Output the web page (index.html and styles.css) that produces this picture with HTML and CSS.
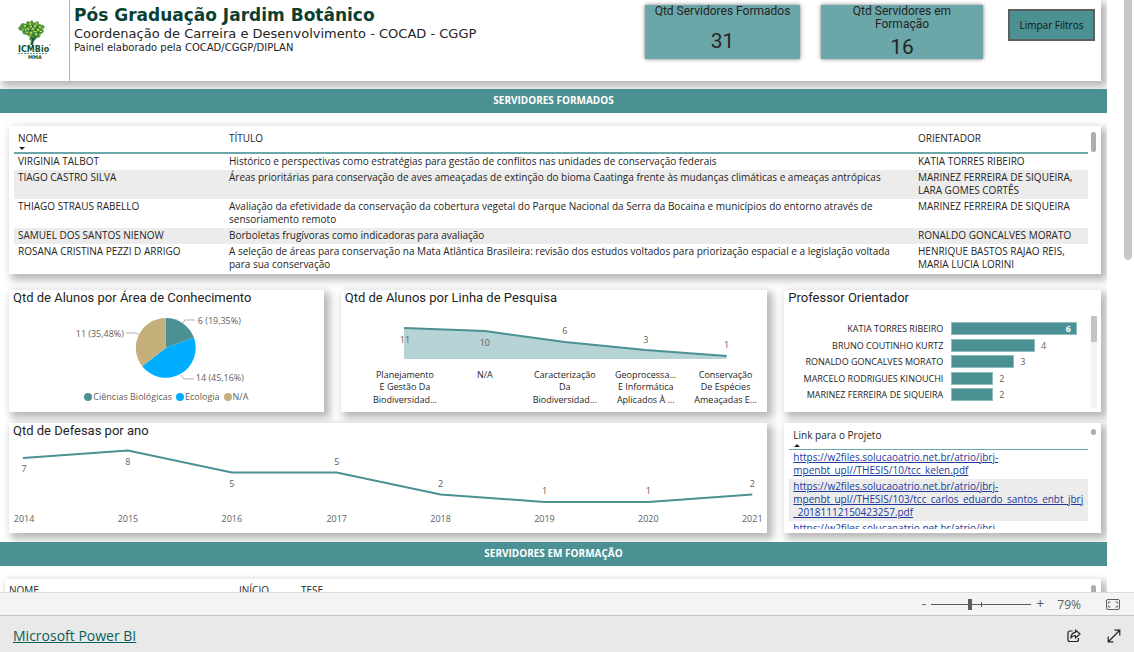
FILE: index.html
```html
<!DOCTYPE html>
<html lang="pt-BR">
<head>
<meta charset="utf-8">
<title>Pós Graduação Jardim Botânico</title>
<link rel="stylesheet" href="styles.css">
</head>
<body>
<main class="viewport">
  <div class="report">
    <header class="header shadow">
      <div class="logo">
        <svg width="34" height="40" viewBox="0 0 34 40" role="img" aria-label="ICMBio MMA">
          <path fill="#4f9440" d="M5 3l3 1 1-3 3 1 2-2 2 3 4-2 1 3 4 1 2 2-2 2 1 3-3 2-1 3-3 1-2 2-2 2-1 3h-2l1-4-2-2 1-2-3-2-4-1-1-3-3-1-1-2 2-2 1-2z"/>
          <path fill="#b4cf45" d="M6 5h2v2H6zM11 3h2v2h-2zM16 5h2v2h-2zM21 6h2v2h-2zM4 9h2v1H4zM9 8h2v2H9zM14 8h2v2h-2zM19 9h2v2h-2zM24 8h2v1h-2zM8 12h2v1H8zM12 12h2v2h-2zM17 13h2v2h-2zM21 14h2v1h-2zM15 17h2v2h-2z"/>
          <path fill="#d9df4e" d="M12 6h2v1h-2zM18 3h1v2h-1zM7 9h1v2H7zM16 11h2v1h-2zM22 11h2v1h-2zM12 15h1v1h-1z"/>
          <path fill="#1b5a35" d="M9 5h1v2H9zM14 5h1v2h-1zM19 6h1v2h-1zM6 10h1v1H6zM11 10h2v1h-2zM17 9h1v2h-1zM20 12h1v2h-1zM15 14h1v2h-1z"/>
          <path fill="#1b5a35" d="M13 16l2 2 2-2 1 1-2 3-1 5h-2l1-5z"/>
          <text class="logo-name" x="0" y="32">ICMBio</text>
          <path stroke="#5d9c83" stroke-dasharray="2 1" d="M0 33.500h29"/>
          <text class="logo-sub" x="10" y="39">MMA</text>
          <circle cx="32" cy="25" r="1" fill="#9fcf9a"/>
        </svg>
      </div>
      <div class="headings">
        <h1>Pós Graduação Jardim Botânico</h1>
        <p class="dept">Coordenação de Carreira e Desenvolvimento - COCAD - CGGP</p>
        <p class="author">Painel elaborado pela COCAD/CGGP/DIPLAN</p>
      </div>
      <section class="kpi"><h2>Qtd Servidores Formados</h2><p>31</p></section>
      <section class="kpi"><h2>Qtd Servidores em Formação</h2><p>16</p></section>
      <button class="clear" type="button">Limpar Filtros</button>
    </header>

    <h2 class="banner">SERVIDORES FORMADOS</h2>

    <div class="grid">
      <section class="panel full shadow">
        <table class="people">
          <colgroup><col class="c-name"><col><col class="c-adv"></colgroup>
          <thead><tr><th>NOME<span class="arrow down"></span></th><th>TÍTULO</th><th>ORIENTADOR</th></tr></thead>
          <tbody>
            <tr><td>VIRGINIA TALBOT</td><td>Histórico e perspectivas como estratégias para gestão de conflitos nas unidades de conservação federais</td><td>KATIA TORRES RIBEIRO</td></tr>
            <tr><td>TIAGO CASTRO SILVA</td><td>Áreas prioritárias para conservação de aves ameaçadas de extinção do bioma Caatinga frente às mudanças climáticas e ameaças antrópicas</td><td>MARINEZ FERREIRA DE SIQUEIRA,<br>LARA GOMES CORTÊS</td></tr>
            <tr><td>THIAGO STRAUS RABELLO</td><td>Avaliação da efetividade da conservação da cobertura vegetal do Parque Nacional da Serra da Bocaina e municípios do entorno através de<br>sensoriamento remoto</td><td>MARINEZ FERREIRA DE SIQUEIRA</td></tr>
            <tr><td>SAMUEL DOS SANTOS NIENOW</td><td>Borboletas frugívoras como indicadoras para avaliação</td><td>RONALDO GONCALVES MORATO</td></tr>
            <tr><td>ROSANA CRISTINA PEZZI D ARRIGO</td><td>A seleção de áreas para conservação na Mata Atlântica Brasileira: revisão dos estudos voltados para priorização espacial e a legislação voltada<br>para sua conservação</td><td>HENRIQUE BASTOS RAJAO REIS,<br>MARIA LUCIA LORINI</td></tr>
          </tbody>
        </table>
        <div class="track"><div class="thumb"></div></div>
      </section>

      <section class="panel chart mid shadow">
        <h3>Qtd de Alunos por Área de Conhecimento</h3>
        <svg class="plot" viewBox="0 0 315 80">
          <path fill="#4b9193" d="M157 40V10A30 30 0 0 1 185.100 29.600Z"/>
          <path fill="#00adff" d="M157 40L185.100 29.600A30 30 0 0 1 133.300 58.400Z"/>
          <path fill="#c5b07b" d="M157 40L133.300 58.400A30 30 0 0 1 157 10Z"/>
          <path class="leader" d="M174 15l2-3h10M117 25h10l3 2M172 67l3 4h10"/>
          <text class="val" x="189" y="16">6 (19,35%)</text>
          <text class="val end" x="115" y="29">11 (35,48%)</text>
          <text class="val" x="187" y="73">14 (45,16%)</text>
        </svg>
        <ul class="legend"><li class="bio">Ciências Biológicas</li><li class="eco">Ecologia</li><li class="na">N/A</li></ul>
      </section>

      <section class="panel chart mid shadow">
        <h3>Qtd de Alunos por Linha de Pesquisa</h3>
        <svg class="plot" viewBox="0 0 427 98">
          <path fill="#b6d3d5" d="M63 20L144 23L224 34L305 42L386 48V51H63Z"/>
          <path class="line" d="M63 20L144 23L224 34L305 42L386 48"/>
          <g class="val mid-text"><text x="64" y="35">11</text><text x="144" y="38">10</text><text x="224" y="26">6</text><text x="305" y="35">3</text><text x="386" y="40">1</text></g>
          <g class="cat mid-text">
            <text x="64" y="70">Planejamento</text><text x="64" y="82">E Gestão Da</text><text x="64" y="95">Biodiversidad...</text>
            <text x="144" y="70">N/A</text>
            <text x="224" y="70">Caracterização</text><text x="224" y="82">Da</text><text x="224" y="95">Biodiversidad...</text>
            <text x="305" y="70">Geoprocessa...</text><text x="305" y="82">E Informática</text><text x="305" y="95">Aplicados À ...</text>
            <text x="385" y="70">Conservação</text><text x="385" y="82">De Espécies</text><text x="385" y="95">Ameaçadas E...</text>
          </g>
        </svg>
      </section>

      <section class="panel chart mid shadow">
        <h3>Professor Orientador</h3>
        <div class="barbox">
          <ul class="bars">
            <li><span class="who">KATIA TORRES RIBEIRO</span><span class="lane"><span class="bar" style="width:100%">6</span></span></li>
            <li><span class="who">BRUNO COUTINHO KURTZ</span><span class="lane"><span class="bar" style="width:66.67%"></span>4</span></li>
            <li><span class="who">RONALDO GONCALVES MORATO</span><span class="lane"><span class="bar" style="width:50%"></span>3</span></li>
            <li><span class="who">MARCELO RODRIGUES KINOUCHI</span><span class="lane"><span class="bar" style="width:33.33%"></span>2</span></li>
            <li><span class="who">MARINEZ FERREIRA DE SIQUEIRA</span><span class="lane"><span class="bar" style="width:33.33%"></span>2</span></li>
          </ul>
          <div class="bar-track"><div class="bar-thumb"></div></div>
        </div>
      </section>

      <section class="panel chart wide low shadow">
        <h3>Qtd de Defesas por ano</h3>
        <svg class="plot" viewBox="0 0 759 88">
          <path class="line" d="M14 17L119 9.500L223 31.500H328L432 53.500L536 61H640L744 53.500"/>
          <g class="val mid-text"><text x="15" y="31">7</text><text x="119" y="24">8</text><text x="223" y="46">5</text><text x="328" y="24">5</text><text x="432" y="46">2</text><text x="536" y="53">1</text><text x="640" y="53">1</text><text x="744" y="46">2</text></g>
          <g class="val mid-text"><text x="15" y="81">2014</text><text x="119" y="81">2015</text><text x="223" y="81">2016</text><text x="328" y="81">2017</text><text x="432" y="81">2018</text><text x="536" y="81">2019</text><text x="640" y="81">2020</text><text x="744" y="81">2021</text></g>
        </svg>
      </section>

      <section class="panel low links-panel shadow">
        <div class="links-clip">
          <table class="links">
            <thead><tr><th>Link para o Projeto<span class="arrow up"></span></th></tr></thead>
            <tbody>
              <tr><td><a href="#p10">https://w2files.solucaoatrio.net.br/atrio/jbrj-<br>mpenbt_upl//THESIS/10/tcc_kelen.pdf</a></td></tr>
              <tr><td><a href="#p103">https://w2files.solucaoatrio.net.br/atrio/jbrj-<br>mpenbt_upl//THESIS/103/tcc_carlos_eduardo_santos_enbt_jbrj<br>_20181112150423257.pdf</a></td></tr>
              <tr><td><a href="#p104">https://w2files.solucaoatrio.net.br/atrio/jbrj-</a></td></tr>
            </tbody>
          </table>
        </div>
        <div class="track"><div class="thumb dot"></div></div>
      </section>
    </div>

    <h2 class="banner">SERVIDORES EM FORMAÇÃO</h2>
    <section class="panel next shadow">
      <table class="people">
        <colgroup><col class="c-name2"><col class="c-start"><col></colgroup>
        <thead><tr><th>NOME</th><th>INÍCIO</th><th>TESE</th></tr></thead>
      </table>
      <div class="track"><div class="thumb"></div></div>
    </section>
  </div>
  <div class="page-scroll"><div class="page-thumb"></div></div>
</main>

<div class="zoombar">
  <button type="button" aria-label="Reduzir">-</button>
  <input class="zoom" type="range" min="0" max="100" value="38" aria-label="Zoom">
  <button type="button" aria-label="Ampliar">+</button>
  <span class="pct">79%</span>
  <button type="button" class="fit" aria-label="Ajustar à página">
    <svg width="14" height="11" viewBox="0 0 14 11" fill="none" stroke="#605e5c"><rect x=".5" y=".5" width="13" height="10" rx="1.500"/><path d="M4.500 3h-2v1.500M9.500 3h2v1.500M2.500 6.500V8h2M11.500 6.500V8h-2"/></svg>
  </button>
</div>
<footer class="footer">
  <a href="#powerbi">Microsoft Power BI</a>
  <button type="button" aria-label="Compartilhar">
    <svg width="14" height="14" viewBox="0 0 14 14" fill="none" stroke="#252423" stroke-width="1.200" stroke-linejoin="round"><path d="M5.500 2H3Q1 2 1 4v6.500q0 2 2 2h6.500q2 0 2-2V9"/><path d="M8.500 1l4.500 4-4.500 4V6.700Q5.500 6.500 3.800 9q.4-5.200 4.700-5.700z"/></svg>
  </button>
  <button type="button" aria-label="Tela cheia">
    <svg width="14" height="14" viewBox="0 0 14 14" fill="none" stroke="#252423" stroke-width="1.200"><path d="M1.500 12.500l11-11M7.500 1.200h5.300v5.300M1.200 7.500v5.300h5.300"/></svg>
  </button>
</footer>
</body>
</html>
```
FILE: styles.css
```css
* { box-sizing: border-box; }
body {
  margin: 0;
  height: 100vh;
  display: flex;
  flex-direction: column;
  overflow: hidden;
  background: #fff;
  color: #252423;
  font-family: "Open Sans", "Noto Sans", sans-serif;
  font-size: 10px;
}
h1, h2, h3, p, ul { margin: 0; padding: 0; font-weight: 400; }
ul { list-style: none; }
button { font-family: inherit; padding: 0; border: 0; background: none; color: #605e5c; }

.viewport { flex: 1; min-height: 0; display: flex; }
.report { flex: 1; min-width: 0; overflow: hidden; }
.page-scroll { width: 27px; padding-left: 17px; }
.page-thumb { width: 8px; height: 44%; background: #c8c8c8; border-radius: 0 0 4px 4px; }
.shadow { background: #fff; box-shadow: 4px 4px 8px 2px #b8b8b8; }

.header { display: flex; align-items: flex-start; margin-right: 6px; padding-right: 6px; height: 81px; }
.logo { width: 70px; height: 81px; border-right: 1px solid #b3b3b3; padding: 20px 0 0 18px; }
.logo-name { font: 900 8px "DejaVu Sans", sans-serif; fill: #12502f; }
.logo-sub { font: 700 5px "DejaVu Sans", sans-serif; fill: #12502f; }
.headings { flex: 1; padding: 5px 0 0 4px; font-family: "DejaVu Sans", sans-serif; white-space: nowrap; }
.headings h1 { font-size: 17px; line-height: 20px; font-weight: 700; color: #0b3f31; }
.dept { font-size: 13px; line-height: 17px; }
.author { font-size: 10px; line-height: 12px; }
.kpi {
  width: 155px;
  height: 54px;
  margin: 5px 21px 0 0;
  padding: 0 9px;
  display: flex;
  flex-direction: column;
  background: #6ba6a8;
  box-shadow: 0 0 4px #777;
  text-align: center;
  font-family: Roboto, sans-serif;
}
.kpi + .kpi { width: 162px; margin-right: 25px; padding: 0 24px; }
.kpi h2 { font-size: 12px; line-height: 13px; }
.kpi p { font-size: 21px; line-height: 24px; flex: 1; display: flex; align-items: center; justify-content: center; padding-top: 4px; }
.clear { margin-top: 9px; width: 87px; height: 32px; background: #4b9193; border: 2px solid #5e5e5e; color: #111; font-size: 10px; }

.banner {
  position: relative;
  margin-top: 8px;
  height: 24px;
  line-height: 22px;
  background: #4b9193;
  color: #fff;
  font-size: 10px;
  font-weight: 700;
  text-align: center;
}

.grid {
  display: grid;
  grid-template-columns: 315fr 427fr 317fr;
  column-gap: 17px;
  margin: 13px 6px 0 9px;
}
.panel { min-width: 0; }
.full { grid-column: 1 / -1; display: flex; height: 148px; padding-left: 5px; margin-bottom: 16px; }
.mid { height: 122px; margin-bottom: 11px; }
.low { height: 110px; }
.wide { grid-column: span 2; }
.grid + .banner { margin-top: 9px; }

table { width: 100%; border-collapse: collapse; table-layout: fixed; }
th, td { text-align: left; vertical-align: top; font-weight: 400; padding: 1px 4px 2px; line-height: 13px; }
th { position: relative; height: 27px; padding-top: 6px; border-bottom: 2px solid #6ba6a8; }
.people { flex: 1; align-self: flex-start; white-space: nowrap; }
tbody tr:nth-child(even) { background: #ececec; }
.c-name { width: 211px; }
.c-adv { width: 174px; }
.c-name2 { width: 230px; }
.c-start { width: 62px; }
.arrow { position: absolute; left: 5px; bottom: 2px; border: 3px solid transparent; }
.arrow.down { border-top-color: #252423; border-bottom: 0; }
.arrow.up { border-bottom-color: #252423; border-top: 0; }
.track { width: 13px; padding: 6px 0 0 3px; }
.thumb { width: 5px; height: 20px; border-radius: 3px; background: #adadad; }
.thumb.dot { height: 6px; }

.chart h3 { font: 13px/16px Roboto, sans-serif; padding-left: 4px; height: 18px; }
.plot { display: block; width: 100%; }
.leader { fill: none; stroke: #b3b0ad; }
.line { fill: none; stroke: #4b9193; stroke-width: 2; }
.val { font-size: 9px; fill: #605e5c; }
.cat { font-size: 9px; fill: #252423; }
.end { text-anchor: end; }
.mid-text { text-anchor: middle; }
.legend { display: flex; justify-content: center; gap: 4px; font-size: 9px; line-height: 18px; color: #605e5c; }
.legend li { display: flex; align-items: center; gap: 1px; }
.legend li::before { content: ""; width: 8px; height: 8px; border-radius: 50%; }
.bio::before { background: #4b9193; }
.eco::before { background: #00adff; }
.na::before { background: #c5b07b; }

.barbox { display: flex; padding: 8px 4px 0 0; }
.bars { flex: 1; height: 79px; margin-top: 6px; display: flex; flex-direction: column; justify-content: space-between; }
.bars li { display: flex; align-items: center; height: 13px; font-size: 9px; line-height: 13px; }
.who { width: 159px; text-align: right; margin-right: 8px; white-space: nowrap; }
.lane { flex: 1; display: flex; align-items: center; gap: 6px; margin-right: 14px; color: #605e5c; }
.bar { height: 13px; background: #4b9193; border: 1px solid #8fbdbe; color: #fff; font-weight: 700; text-align: right; padding-right: 5px; line-height: 11px; }
.bar-track { width: 6px; height: 92px; background: #f3f3f3; }
.bar-thumb { height: 26px; background: #c4c4c4; }

.links-panel { display: flex; padding-left: 5px; }
.links-clip { flex: 1; min-width: 0; height: 106px; overflow: hidden; }
.links { white-space: nowrap; }
.links th { height: 26px; border-bottom-width: 1px; }
.links a { color: #20399b; }

.next { display: flex; margin: 13px 6px 0 5px; height: 147px; }
.next th { padding-top: 5px; }

.zoombar {
  display: flex;
  align-items: center;
  justify-content: flex-end;
  height: 24px;
  padding-right: 14px;
  background: #f4f4f4;
  border-top: 1px solid #dcdcdc;
  border-bottom: 1px solid #c4c4c4;
  font-size: 12px;
  color: #605e5c;
}
.zoombar button { font-size: 14px; line-height: 20px; }
.zoom {
  appearance: none;
  width: 100px;
  height: 12px;
  margin: 0 5px 0 5px;
  background: linear-gradient(#605e5c, #605e5c) 50px 50% / 1px 5px no-repeat, linear-gradient(#605e5c, #605e5c) 0 50% / 100% 1px no-repeat;
}
.zoom::-webkit-slider-thumb { appearance: none; width: 4px; height: 11px; background: #605e5c; }
.pct { margin: 0 25px 0 13px; }
.fit svg, .footer svg { display: block; }
.footer { display: flex; align-items: center; height: 36px; padding: 3px 13px 0; background: #e9e9e9; }
.footer a { margin-right: auto; font-size: 14px; color: #0b6158; }
.footer button + button { margin-left: 26px; }
```
